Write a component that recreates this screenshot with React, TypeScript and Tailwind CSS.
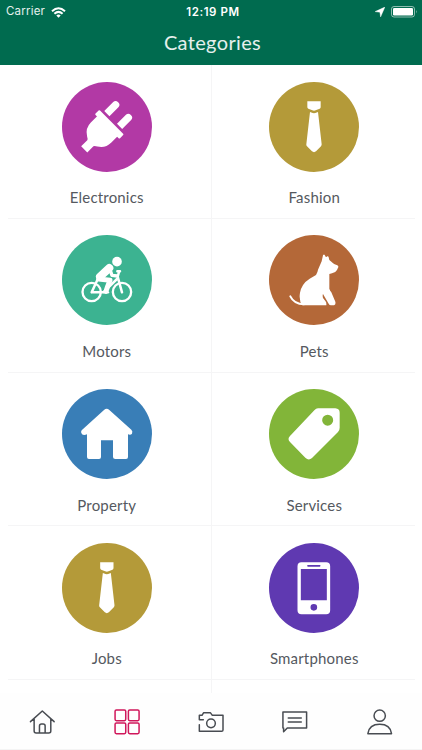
import type { ReactNode } from 'react';

type Category = {
  name: string;
  color: string;
  viewBox: string;
  icon: ReactNode;
};

const tie = (
  <>
    <path d="M158 93H198V110Q198 113 195 115L183 120Q178 122 173 120L161 115Q158 113 158 110Z" />
    <path d="M166 125L174 128Q178 129 182 128L190 125L201 222Q201 225 199 228L184 243Q178 248 172 243L157 228Q154 225 155 222Z" />
  </>
);

const categories: Category[] = [
  {
    name: 'Electronics',
    color: 'bg-[#b239a5]',
    viewBox: '36 35 270 270',
    icon: (
      <g transform="translate(184 156) rotate(45)">
        <path d="M-39 -9V-47Q-39 -57 -28 -57T-17 -47V-9ZM15 -9V-47Q15 -57 26 -57T37 -47V-9Z" />
        <rect x="-52" y="-1" width="104" height="19" rx="3" />
        <path d="M-43 12H43V44Q43 68 22 81Q14 85 13 89V115H-13V89Q-14 85 -22 81Q-43 68 -43 44Z" />
      </g>
    ),
  },
  { name: 'Fashion', color: 'bg-[#b49a39]', viewBox: '43 35 270 270', icon: tie },
  {
    name: 'Motors',
    color: 'bg-[#3cb391]',
    viewBox: '36 31 270 270',
    icon: (
      <>
        <circle cx="201" cy="111" r="14.500" />
        <g fill="none" stroke="white" strokeLinecap="round" strokeLinejoin="round">
          <circle cx="125" cy="202" r="27.500" strokeWidth="7" />
          <circle cx="216" cy="202" r="27.500" strokeWidth="7" />
          <path d="M125 203H160L201 163M125 203L142 166M207 142L203 156L216 203M202 140H210" strokeWidth="7.500" />
          <path d="M178 130L150 156" strokeWidth="24" />
          <path d="M179 132L186 152L202 154" strokeWidth="10" />
          <path d="M146 163L180 167L173 185L168 200" strokeWidth="15" />
          <path d="M163 203H174" strokeWidth="7" />
        </g>
      </>
    ),
  },
  {
    name: 'Pets',
    color: 'bg-[#b46838]',
    viewBox: '43 31 270 270',
    icon: (
      <>
        <path d="M205 92Q208 87 210 91L214 98L218 95Q221 94 222 98L224 106L231 112Q235 116 240 119L248 122Q253 125 250 129L247 136Q243 144 232 146L224 148V192Q226 198 230 203L242 231Q244 240 238 242H229Q224 242 222 237L205 208Q203 212 205 220L212 229Q216 233 215 242H143Q132 228 136 204Q141 177 165 162L184 151Q189 143 190 135L201 110Z" />
        <path d="M107 215Q118 238 148 239" fill="none" stroke="white" strokeWidth="6" strokeLinecap="round" />
      </>
    ),
  },
  {
    name: 'Property',
    color: 'bg-[#397eb7]',
    viewBox: '36 27 270 270',
    icon: (
      <path d="M162 90Q170 83 178 90L244 149Q249 154 246 161Q242 166 234 163V231Q234 237 228 237H196Q189 237 189 231V181H153V231Q153 237 147 237H117Q111 237 111 231V163Q102 167 96 163Q90 157 95 151Z" />
    ),
  },
  {
    name: 'Services',
    color: 'bg-[#82b539]',
    viewBox: '43 27 270 270',
    icon: (
      <path
        fillRule="evenodd"
        d="M190 85H242Q255 86 255 98V143Q255 151 250 156L172 234Q162 243 152 233L106 186Q97 177 106 168L179 91Q184 85 190 85ZM219 104A16.500 16.500 0 1 0 219 137A16.500 16.500 0 1 0 219 104Z"
      />
    ),
  },
  { name: 'Jobs', color: 'bg-[#b49a39]', viewBox: '43.500 35 270 270', icon: tie },
  {
    name: 'Smartphones',
    color: 'bg-[#5f39b1]',
    viewBox: '42.500 23 270 270',
    icon: (
      <path
        fillRule="evenodd"
        d="M140 81H214Q226 81 226 93V225Q226 237 214 237H140Q128 237 128 225V93Q128 81 140 81ZM138 101V195H216V101ZM159 89Q157 89 157 91.500T159 94H195Q197 94 197 91.500T195 89ZM177 206A10 10 0 1 0 177 226A10 10 0 1 0 177 206Z"
      />
    ),
  },
];

const tabs = [
  {
    name: 'Home',
    viewBox: '84.600 113 84 84',
    color: 'text-[#484c52]',
    icon: <path d="M92 154L127.500 122L163 154M103 146V182Q103 188 109 188H147Q153 188 153 182V146M119 188V167Q119 161 125 161H130Q136 161 136 167V188" />,
  },
  {
    name: 'Categories',
    viewBox: '337.800 113 84 84',
    color: 'text-[#d0175b]',
    icon: (
      <>
        <rect x="344" y="119" width="32" height="32" rx="4" />
        <rect x="384" y="119" width="32" height="32" rx="4" />
        <rect x="344" y="158" width="32" height="32" rx="4" />
        <rect x="384" y="158" width="32" height="32" rx="4" />
      </>
    ),
  },
  {
    name: 'Camera',
    viewBox: '591 113 84 84',
    color: 'text-[#484c52]',
    icon: (
      <>
        <path d="M598 163V183H665Q669 183 669 179V135H637L631 127H611L606 135H598V148H610" />
        <circle cx="633" cy="159" r="13" />
      </>
    ),
  },
  {
    name: 'Messages',
    viewBox: '211.200 113 84 84',
    color: 'text-[#484c52]',
    icon: <path d="M217 125H288V173H230L219 184V173H217ZM233 143H272M233 155H272" />,
  },
  {
    name: 'Profile',
    viewBox: '464.400 113 84 84',
    color: 'text-[#484c52]',
    icon: (
      <>
        <circle cx="505.500" cy="136" r="17" />
        <path d="M470 190Q474 162 505.500 162T541 190Z" />
      </>
    ),
  },
];

function StatusBar() {
  return (
    <div className="grid h-[22px] grid-cols-3 items-center pr-1 pl-1.5 font-['Inter',sans-serif] text-white">
      <div className="flex items-center gap-1.5">
        <span className="text-[11.500px] tracking-[0.2px] text-white/90">Carrier</span>
        <svg className="h-[11px] w-[15px]" viewBox="0 0 15 11" fill="none" stroke="white" strokeWidth="2">
          <path d="M1 4.200Q7.500 -1.800 14 4.200M3.400 6.700Q7.500 3 11.600 6.700" />
          <path d="M5.300 8.400Q7.500 6.500 9.700 8.400L7.500 10.700Z" fill="white" stroke="none" />
        </svg>
      </div>
      <div className="pl-[2px] text-center text-[11.500px] leading-[24px] font-semibold tracking-[0.550px]">12:19 PM</div>
      <div className="flex items-center justify-end gap-[6px]">
        <svg className="h-[10px] w-[10px]" viewBox="0 0 10 10" fill="white">
          <path d="M9.900 .1L5.600 9.900L4.900 5.300L.1 4.600Z" stroke="white" strokeWidth=".4" />
        </svg>
        <svg className="h-[12px] w-[27px]" viewBox="0 0 27 12">
          <rect x=".5" y=".5" width="23" height="10.500" rx="2.500" fill="none" stroke="white" strokeOpacity=".55" />
          <rect x="2" y="2" width="20" height="7.500" rx="1.300" fill="white" />
          <path d="M25 4Q26.500 5.700 25 7.500Z" fill="white" fillOpacity=".55" />
        </svg>
      </div>
    </div>
  );
}

export default function App() {
  return (
    <div className="flex h-[750px] w-[422px] flex-col overflow-hidden bg-white font-['Lato',sans-serif]">
      <header className="h-[65px] shrink-0 bg-[#006b4f]">
        <StatusBar />
        <h1 className="pl-[3px] text-center text-[20px] leading-[40px] tracking-[0.35px] text-white/90">Categories</h1>
      </header>

      <main className="h-[628px] shrink-0 overflow-hidden pr-[7px] pl-2">
        <div className="grid grid-cols-2">
          {categories.map((category, index) => (
            <div
              key={category.name}
              className={`flex h-[153.800px] flex-col items-center border-b border-[#f5f5f6] pt-[16.600px] ${
                index % 2 === 0 ? 'border-r pr-[5px]' : 'pl-[2px]'
              }`}
            >
              <div className={`size-[90px] shrink-0 rounded-full ${category.color}`}>
                <svg className="size-full" viewBox={category.viewBox} fill="white">
                  {category.icon}
                </svg>
              </div>
              <div className="mt-[13.500px] text-[15px] leading-6 tracking-[0.18px] text-[#555960]">{category.name}</div>
            </div>
          ))}
          <div className="h-4 border-r border-[#f5f5f6]" />
        </div>
      </main>

      <nav className="flex h-[57px] shrink-0 border-b border-[#f4f4f4] bg-[#fefefe] pt-[14.700px]">
        {tabs.map((tab) => (
          <button key={tab.name} aria-label={tab.name} className={`flex flex-1 items-start justify-center ${tab.color}`}>
            <svg
              className="h-7 w-7"
              viewBox={tab.viewBox}
              fill="none"
              stroke="currentColor"
              strokeWidth="4.500"
              strokeLinecap="round"
              strokeLinejoin="round"
            >
              {tab.icon}
            </svg>
          </button>
        ))}
      </nav>
    </div>
  );
}
